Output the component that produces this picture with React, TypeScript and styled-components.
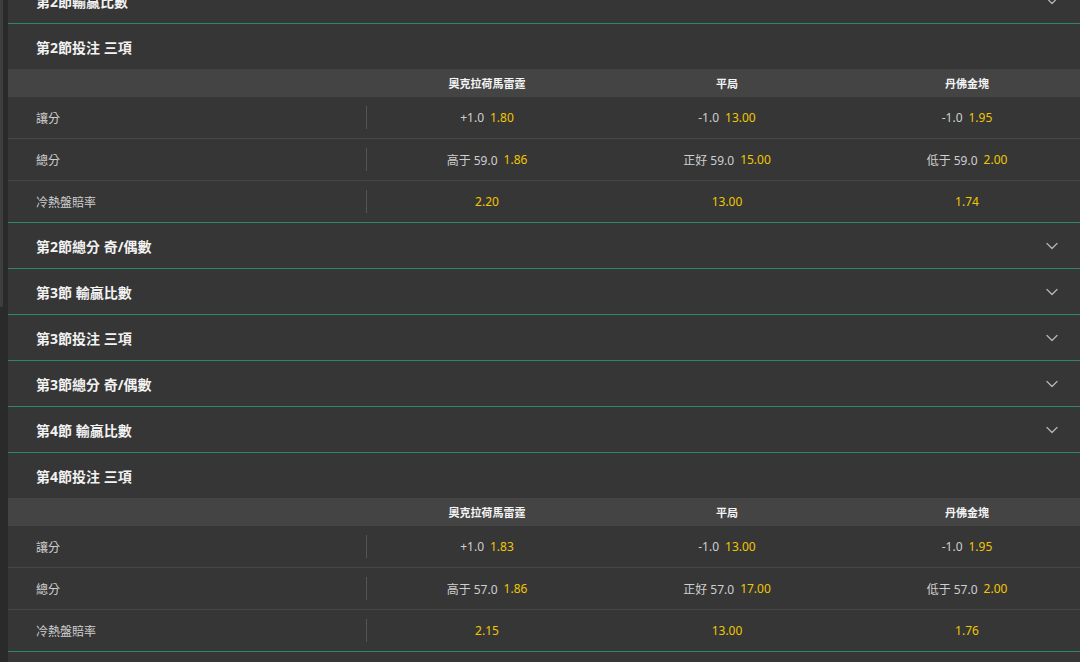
import React from "react";
import styled, { createGlobalStyle } from "styled-components";

type Odd = { line?: string; price: string };
type Market = { label: string; odds: Odd[] };
type Section =
  | { title: string; open: false }
  | { title: string; open: true; teams: string[]; markets: Market[] };

const TEAMS = ["奧克拉荷馬雷霆", "平局", "丹佛金塊"];

const SECTIONS: Section[] = [
  { title: "第2節輸贏比數", open: false },
  {
    title: "第2節投注 三項",
    open: true,
    teams: TEAMS,
    markets: [
      {
        label: "讓分",
        odds: [
          { line: "+1.0", price: "1.80" },
          { line: "-1.0", price: "13.00" },
          { line: "-1.0", price: "1.95" }
        ]
      },
      {
        label: "總分",
        odds: [
          { line: "高于 59.0", price: "1.86" },
          { line: "正好 59.0", price: "15.00" },
          { line: "低于 59.0", price: "2.00" }
        ]
      },
      {
        label: "冷熱盤賠率",
        odds: [{ price: "2.20" }, { price: "13.00" }, { price: "1.74" }]
      }
    ]
  },
  { title: "第2節總分 奇/偶數", open: false },
  { title: "第3節 輸贏比數", open: false },
  { title: "第3節投注 三項", open: false },
  { title: "第3節總分 奇/偶數", open: false },
  { title: "第4節 輸贏比數", open: false },
  {
    title: "第4節投注 三項",
    open: true,
    teams: TEAMS,
    markets: [
      {
        label: "讓分",
        odds: [
          { line: "+1.0", price: "1.83" },
          { line: "-1.0", price: "13.00" },
          { line: "-1.0", price: "1.95" }
        ]
      },
      {
        label: "總分",
        odds: [
          { line: "高于 57.0", price: "1.86" },
          { line: "正好 57.0", price: "17.00" },
          { line: "低于 57.0", price: "2.00" }
        ]
      },
      {
        label: "冷熱盤賠率",
        odds: [{ price: "2.15" }, { price: "13.00" }, { price: "1.76" }]
      }
    ]
  }
];

const Chevron = () => (
  <svg width="12" height="8" viewBox="0 0 12 8" fill="none">
    <polyline
      points="1,1.5 6,6.5 11,1.5"
      stroke="#b4b4b4"
      strokeWidth="1.3"
      strokeLinecap="round"
      strokeLinejoin="round"
    />
  </svg>
);

export default function App() {
  return (
    <>
      <GlobalStyle />
      <Screen>
        <Rail>
          <Thumb />
        </Rail>
        <Panel>
          <List>
            {SECTIONS.map((s, i) => (
              <Group key={i}>
                <Head>
                  <Title>{s.title}</Title>
                  {!s.open && <Chevron />}
                </Head>
                {s.open && (
                  <Table>
                    <TeamBar>
                      <span />
                      {s.teams.map((t) => (
                        <TeamName key={t}>{t}</TeamName>
                      ))}
                    </TeamBar>
                    {s.markets.map((m) => (
                      <MarketRow key={m.label}>
                        <MarketLabel>{m.label}</MarketLabel>
                        {m.odds.map((o, j) => (
                          <OddCell key={j}>
                            {o.line && <Line>{o.line}</Line>}
                            <Price>{o.price}</Price>
                          </OddCell>
                        ))}
                      </MarketRow>
                    ))}
                  </Table>
                )}
              </Group>
            ))}
          </List>
        </Panel>
      </Screen>
    </>
  );
}

const GlobalStyle = createGlobalStyle`
  html, body {
    margin: 0;
    padding: 0;
    background: #363636;
    overflow: hidden;
  }
  body {
    font-family: "Noto Sans", "Noto Sans CJK TC", sans-serif;
  }
`;

const Screen = styled.div`
  display: flex;
  width: 1080px;
  height: 662px;
  overflow: hidden;
`;

const Rail = styled.div`
  flex: 0 0 8px;
  background: #2a2a2a;
  display: flex;
  flex-direction: column;
`;

const Thumb = styled.div`
  width: 3px;
  height: 307px;
  background: #3e3e3e;
  border-radius: 0 0 2px 0;
`;

const Panel = styled.div`
  flex: 0 0 1079px;
  background: #363636;
`;

const List = styled.div`
  margin-top: -22px;
`;

const Group = styled.section`
  border-bottom: 1px solid #2b8a63;
`;

const Head = styled.div`
  height: 45px;
  padding: 0 29px 0 28px;
  display: flex;
  align-items: center;
  justify-content: space-between;
`;

const Title = styled.h3`
  margin: 0;
  font-size: 14px;
  font-weight: 700;
  color: #f2f2f2;
`;

const Table = styled.div`
  display: flex;
  flex-direction: column;
`;

const Grid = styled.div`
  display: grid;
  grid-template-columns: 359px repeat(3, 240px);
  align-items: center;
`;

const TeamBar = styled(Grid)`
  height: 28px;
  background: #444444;
`;

const TeamName = styled.div`
  text-align: center;
  font-size: 11px;
  font-weight: 700;
  color: #f4f4f4;
`;

const MarketRow = styled(Grid)`
  height: 41px;
  & + & {
    border-top: 1px solid #474747;
  }
`;

const MarketLabel = styled.div`
  position: relative;
  height: 100%;
  display: flex;
  align-items: center;
  padding-left: 28px;
  font-size: 12px;
  color: #cfcfcf;

  &::after {
    content: "";
    position: absolute;
    right: 0;
    top: 9px;
    bottom: 9px;
    width: 1px;
    background: #555555;
  }
`;

const OddCell = styled.div`
  display: flex;
  justify-content: center;
  align-items: center;
  gap: 6px;
  font-size: 12px;
`;

const Line = styled.span`
  color: #cfcfcf;
`;

const Price = styled.span`
  color: #f0c600;
`;
